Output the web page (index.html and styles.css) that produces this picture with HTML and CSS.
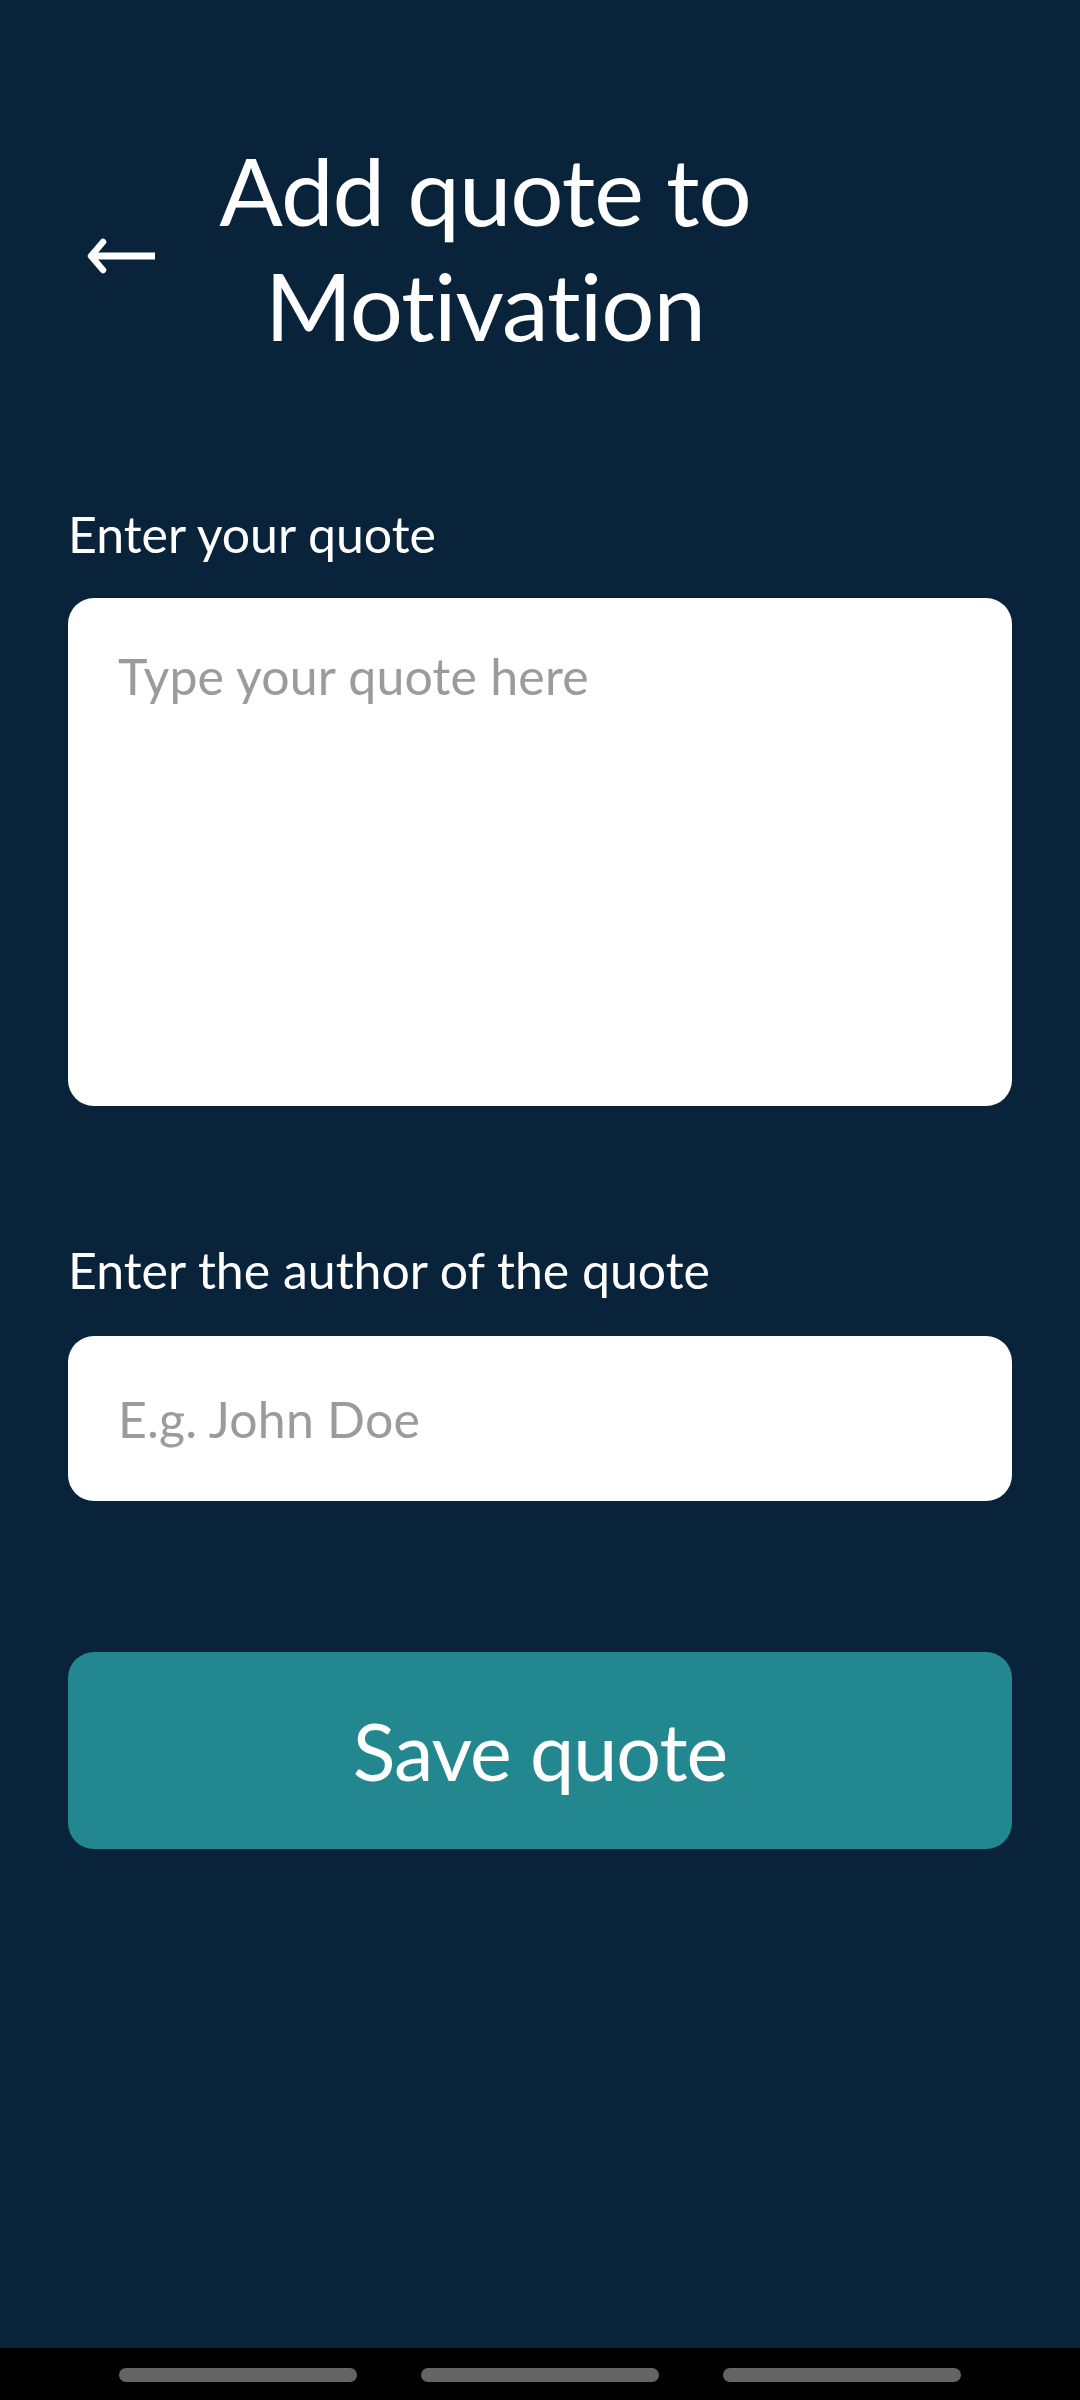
FILE: index.html
```html
<!DOCTYPE html>
<html lang="en">
<head>
<meta charset="utf-8">
<title>Add quote to Motivation</title>
<link rel="stylesheet" href="styles.css">
</head>
<body>
<div class="screen">
  <main class="app">
    <header class="header">
      <button class="back" aria-label="Back">
        <svg width="72" height="36" viewBox="0 0 72 36" aria-hidden="true">
          <path d="M69 18 H8" stroke="#fff" stroke-width="7" stroke-linecap="butt" fill="none"/>
          <path d="M17 4 L5 18 L17 32" stroke="#fff" stroke-width="6.5" stroke-linecap="round" stroke-linejoin="round" fill="none"/>
        </svg>
      </button>
      <h1 class="title">Add quote to<br>Motivation</h1>
    </header>

    <section class="field field-quote">
      <label class="label" for="quote">Enter your quote</label>
      <textarea id="quote" class="box textarea" placeholder="Type your quote here"></textarea>
    </section>

    <section class="field field-author">
      <label class="label" for="author">Enter the author of the quote</label>
      <input id="author" class="box input" type="text" placeholder="E.g. John Doe">
    </section>

    <button class="save">Save quote</button>
  </main>
  <nav class="navbar">
    <span class="pill"></span>
    <span class="pill"></span>
    <span class="pill"></span>
  </nav>
</div>
</body>
</html>
```
FILE: styles.css
```css
* { box-sizing: border-box; }
html, body {
  margin: 0;
  padding: 0;
  background: #09233a;
}
body {
  width: 1080px;
  height: 2400px;
  font-family: Lato, "Open Sans", sans-serif;
  color: #fff;
  overflow: hidden;
}
.screen {
  display: flex;
  flex-direction: column;
  height: 2400px;
}
.app {
  flex: 1;
  display: flex;
  flex-direction: column;
  padding: 0 68px;
}
.header {
  display: flex;
  align-items: center;
  margin-top: 132px;
}
.back {
  width: 112px;
  padding: 0 0 0 18px;
  margin: 18px 0 0 0;
  border: 0;
  background: transparent;
  display: flex;
  align-items: center;
}
.back svg { display: block; }
.title {
  flex: 0 0 610px;
  margin: 0;
  text-align: center;
  font-weight: 400;
  font-size: 94px;
  line-height: 115px;
  letter-spacing: -1px;
}
.field {
  display: flex;
  flex-direction: column;
}
.field-quote { margin-top: 142px; }
.field-author { margin-top: 134px; }
.label {
  font-size: 50px;
  line-height: 60px;
  letter-spacing: 0;
}
.box {
  display: block;
  width: 944px;
  background: #fff;
  border: 0;
  border-radius: 26px;
  font-family: Lato, "Open Sans", sans-serif;
  font-size: 50px;
  color: #222;
  outline: none;
  letter-spacing: 0.2px;
}
.box::placeholder { color: #9b9b9b; opacity: 1; }
.textarea {
  margin-top: 34px;
  height: 508px;
  padding: 48px 50px;
  resize: none;
  line-height: 60px;
}
.input {
  margin-top: 36px;
  height: 165px;
  padding: 0 50px;
}
.save {
  margin-top: 151px;
  width: 944px;
  height: 197px;
  border: 0;
  border-radius: 26px;
  background: #22878f;
  color: #fff;
  font-family: Lato, "Open Sans", sans-serif;
  font-size: 79px;
  letter-spacing: -1px;
}
.navbar {
  height: 52px;
  background: #000;
  display: flex;
  justify-content: center;
  align-items: flex-start;
  gap: 64px;
  padding-top: 20px;
}
.pill {
  width: 238px;
  height: 14px;
  border-radius: 7px;
  background: #646464;
}
```
